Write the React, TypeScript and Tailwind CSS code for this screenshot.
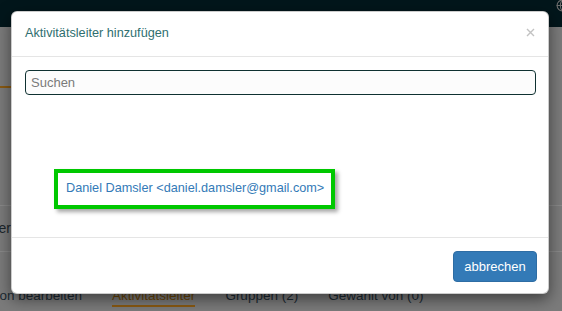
import React from 'react';
import { Globe } from 'lucide-react';

const font = { fontFamily: '"Liberation Sans", Arial, sans-serif' };

const tabs = [
  { label: 'Lektion bearbeiten', active: false, cls: 'ml-[-29px]' },
  { label: 'Aktivitätsleiter', active: true, cls: '' },
  { label: 'Gruppen (2)', active: false, cls: '' },
  { label: 'Gewählt von (0)', active: false, cls: '' },
];

const Background: React.FC = () => (
  <div className="w-[562px] h-[311px] bg-[#7b7b7b] flex flex-col">
    {/* top navbar */}
    <div className="h-[27px] bg-[#02161b] flex justify-end items-start">
      <Globe className="w-[13px] h-[13px] text-[#6d6d6d] mr-[-7px] mt-[-1px]" />
    </div>
    <div className="h-[59px]" />
    <div className="h-[2px] w-[220px] bg-[#8a5a12]" />
    <div className="h-[117px]" />
    <div className="h-[47px] border-y border-[#898989] flex items-center">
      <div className="w-[11px] overflow-hidden flex justify-end whitespace-nowrap text-[14px] text-[#1c262c]">
        <span>Leiter</span>
      </div>
    </div>
    <div className="flex mt-[36px] gap-[30px] whitespace-nowrap text-[13.5px] leading-[16px]">
      {tabs.map((t) => (
        <div
          key={t.label}
          className={`${t.cls} pb-[1px] ${t.active ? 'text-[#6b4607] border-b-2 border-[#8a5a12]' : 'text-[#1c2a33]'}`}
        >
          {t.label}
        </div>
      ))}
    </div>
  </div>
);

const App: React.FC = () => {
  return (
    <div className="relative w-[562px] h-[311px] overflow-hidden" style={font}>
      <Background />

      {/* modal */}
      <div className="absolute left-[11px] top-[11px] w-[538px] bg-white rounded-[6px] border border-black/20 shadow-[0_5px_15px_rgba(0,0,0,0.5)]">
        <div className="flex items-center justify-between pl-[13px] pr-[13px] pt-[14px] pb-[15px] border-b border-[#e5e5e5]">
          <h4 className="text-[12.7px] leading-[15px] text-[#2f6f70]">Aktivitätsleiter hinzufügen</h4>
          <svg width="9" height="9" viewBox="0 0 9 9" className="mt-[-2px]">
            <path d="M1 1 L8 8 M8 1 L1 8" stroke="#c2c2c2" strokeWidth="1.4" fill="none" />
          </svg>
        </div>

        <div className="pl-[13px] pr-[12px] pt-[13px] pb-[28px]">
          <input
            className="w-full h-[25px] rounded-[4px] border border-[#0f3131] bg-[#fcfcfc] px-[5px] text-[13px] text-[#333] placeholder:text-[#7a7a7a] outline-none"
            placeholder="Suchen"
          />
          <div className="mt-[74px] ml-[29px] w-[281px] h-[40px] border-4 border-[#00c800] shadow-[3px_3px_4px_rgba(0,0,0,0.35)] flex items-center pl-[8px]">
            <a className="text-[12.7px] text-[#337ab7] whitespace-nowrap cursor-pointer">
              Daniel Damsler &lt;daniel.damsler@gmail.com&gt;
            </a>
          </div>
        </div>

        <div className="border-t border-[#e5e5e5] flex justify-end pt-[13px] pb-[11px] pr-[11px]">
          <button className="w-[84px] h-[31px] rounded-[4px] bg-[#337ab7] border border-[#2e6da4] text-white text-[13px]">
            abbrechen
          </button>
        </div>
      </div>
    </div>
  );
};

export default App;
